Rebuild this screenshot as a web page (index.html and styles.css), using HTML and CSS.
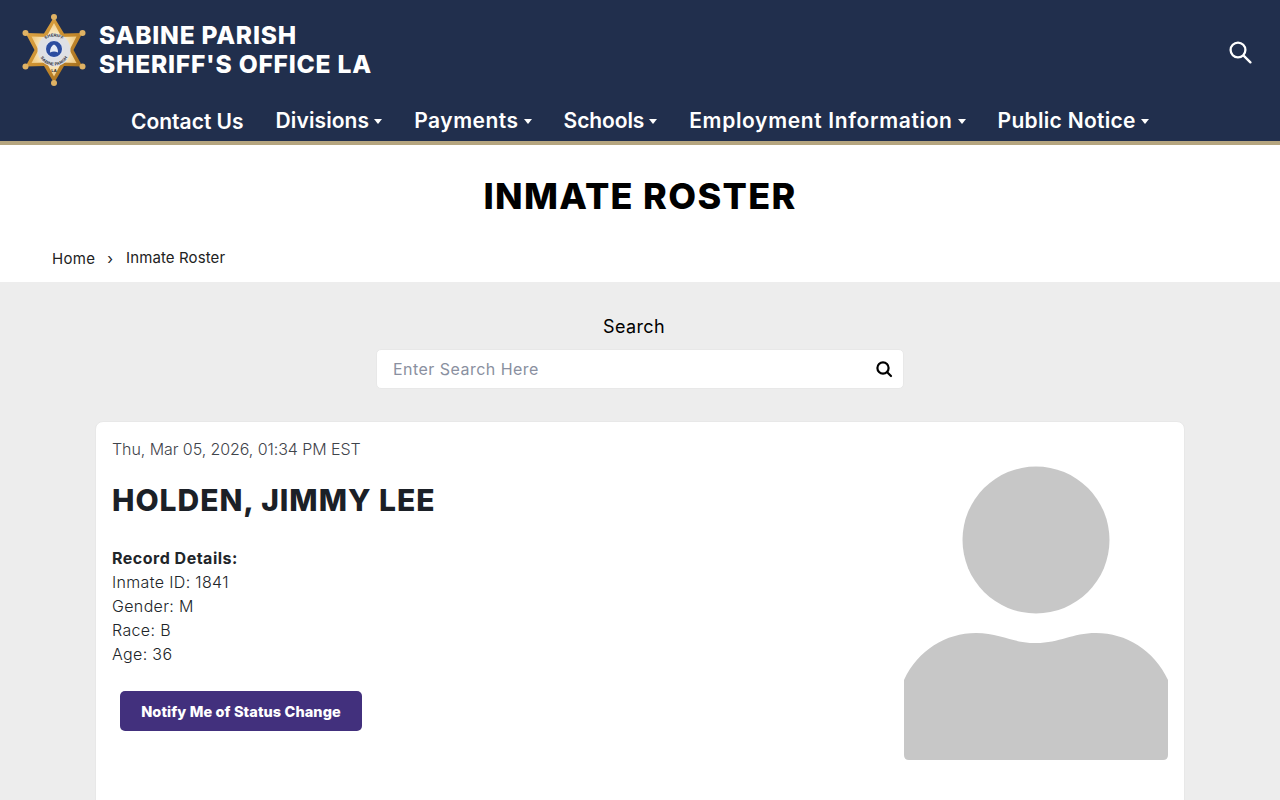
FILE: index.html
```html
<!DOCTYPE html>
<html lang="en">
<head>
<meta charset="utf-8">
<title>Inmate Roster</title>
<link rel="stylesheet" href="styles.css">
</head>
<body>
<header class="site-header">
  <div class="top-row">
    <a class="brand">
      <svg class="badge" viewBox="0 0 68 76" width="68" height="76" aria-hidden="true">
        <defs>
          <linearGradient id="gold" x1="0" y1="0" x2="1" y2="1">
            <stop offset="0" stop-color="#e3aa4a"/>
            <stop offset="0.5" stop-color="#c98d2e"/>
            <stop offset="1" stop-color="#99661a"/>
          </linearGradient>
          <radialGradient id="cream" cx="0.5" cy="0.5" r="0.55">
            <stop offset="0.4" stop-color="#fff3d6"/>
            <stop offset="1" stop-color="#eec77c"/>
          </radialGradient>
          <path id="arcTop" d="M20.5 38 A13.5 13.5 0 0 1 47.5 38"/>
          <path id="arcBottom" d="M18.5 38 A15.5 15.5 0 0 0 49.5 38"/>
        </defs>
        <path d="M34 5 L44 21.5 L62.5 21 L53.5 38 L62.5 54.5 L44 54 L34 71 L24 54 L5.5 54.5 L14.5 38 L5.5 21 L24 21.5 Z" fill="url(#gold)"/>
        <path d="M34 11 L41.5 25 L56.5 24.5 L49.5 38 L56.5 51 L41.5 50.5 L34 64.5 L26.5 50.5 L11.5 51 L18.5 38 L11.5 24.5 L26.5 25 Z" fill="url(#cream)"/>
        <circle cx="34" cy="5" r="3" fill="#dfb264"/>
        <circle cx="62.5" cy="21" r="3" fill="#dfb264"/>
        <circle cx="62.5" cy="54.5" r="3" fill="#dfb264"/>
        <circle cx="34" cy="71" r="3" fill="#dfb264"/>
        <circle cx="5.5" cy="54.5" r="3" fill="#dfb264"/>
        <circle cx="5.5" cy="21" r="3" fill="#dfb264"/>
        <circle cx="34" cy="38" r="16.5" fill="#dfe0e4"/>
        <text class="badge-text"><textPath href="#arcTop" startOffset="50%" text-anchor="middle">SHERIFF</textPath></text>
        <text class="badge-text"><textPath href="#arcBottom" startOffset="50%" text-anchor="middle">SABINE PARISH</textPath></text>
        <text class="badge-text" x="34" y="60" text-anchor="middle">LA</text>
        <circle cx="34" cy="37" r="8.5" fill="#2c4da0"/>
        <circle cx="34" cy="37" r="8.5" fill="none" stroke="#eef1f8" stroke-width="0.9"/>
        <path d="M30 40.5 Q30 34.5 34 32.5 Q38 34.5 38 40.5 Q34 38.5 30 40.5 Z" fill="#e6ebf6"/>
      </svg>
      <span class="brand-name">SABINE PARISH<br>SHERIFF'S OFFICE LA</span>
    </a>
    <button class="icon-btn" aria-label="Search">
      <svg viewBox="0 0 24 24" width="24" height="24" fill="none" stroke="#fff" stroke-width="2.3" stroke-linecap="round"><circle cx="10" cy="10" r="7.4"/><path d="M15.6 15.6 L22.4 22.4"/></svg>
    </button>
  </div>
  <nav class="main-nav">
    <a class="nav-item nav-plain">Contact Us</a>
    <a class="nav-item nav-div">Divisions<i class="caret"></i></a>
    <a class="nav-item nav-pay">Payments<i class="caret"></i></a>
    <a class="nav-item nav-sch">Schools<i class="caret"></i></a>
    <a class="nav-item nav-emp">Employment Information<i class="caret"></i></a>
    <a class="nav-item nav-pub">Public Notice<i class="caret"></i></a>
  </nav>
</header>

<section class="title-band">
  <h1>INMATE ROSTER</h1>
  <div class="crumbs"><a class="crumb-link">Home</a><span class="sep">›</span><span class="current">Inmate Roster</span></div>
</section>

<main class="content">
  <div class="search-block">
    <label class="search-label">Search</label>
    <div class="search-box">
      <span class="placeholder">Enter Search Here</span>
      <svg viewBox="0 0 18 18" width="18" height="18" fill="none" stroke="#000" stroke-width="2.2" stroke-linecap="round"><circle cx="8" cy="8" r="5.6"/><path d="M12.2 12.2 L16 16"/></svg>
    </div>
  </div>

  <article class="card">
    <div class="card-left">
      <div class="stamp">Thu, Mar 05, 2026, 01:34 PM EST</div>
      <h2>HOLDEN, JIMMY LEE</h2>
      <div class="details">
        <strong class="details-head">Record Details:</strong>
        <div>Inmate ID: 1841</div>
        <div>Gender: M</div>
        <div>Race: B</div>
        <div>Age: 36</div>
      </div>
      <button class="notify">Notify Me of Status Change</button>
    </div>
    <svg class="avatar" viewBox="0 0 264 296" width="264" height="296" aria-hidden="true">
      <circle cx="132" cy="74" r="73.5" fill="#c7c7c7"/>
      <path d="M0 214 C14 184 42 167 72 167 C96 167 108 177 132 177 C156 177 168 167 192 167 C222 167 250 184 264 214 L264 289 Q264 294 259 294 L5 294 Q0 294 0 289 Z" fill="#c7c7c7"/>
    </svg>
  </article>
</main>
</body>
</html>
```
FILE: styles.css
```css
* { box-sizing: border-box; }
html, body { margin: 0; padding: 0; height: 800px; overflow: hidden; }
body { font-family: "Inter", "Liberation Sans", sans-serif; background: #ededed; color: #000; }

.site-header { background: #212f4d; border-bottom: 4px solid #b5a57f; height: 145px; display: flex; flex-direction: column; }
.top-row { height: 100px; display: flex; align-items: flex-start; justify-content: space-between; padding: 12px 28px 0 20px; }
.brand { display: flex; align-items: center; gap: 11px; color: #fff; }
.badge { display: block; }
.badge-text { font-family: "Liberation Sans", sans-serif; font-size: 4.2px; font-weight: 700; fill: #2e2f36; }
.brand-name { font-size: 24.6px; line-height: 29px; font-weight: 800; letter-spacing: 0.76px; margin-bottom: 1px; }
.icon-btn { background: none; border: 0; padding: 0; margin-top: 28px; height: 24px; }

.main-nav { display: flex; padding-left: 131px; gap: 32px; align-items: center; height: 40px; }
.nav-item { color: #fff; font-size: 21px; font-weight: 600; display: flex; align-items: center; white-space: nowrap; }
.nav-plain { position: relative; top: 1px; }
.nav-div { letter-spacing: 0.1px; }
.nav-pay { letter-spacing: 0.5px; }
.nav-sch { letter-spacing: -0.1px; }
.nav-emp { letter-spacing: 0.65px; }
.nav-pub { letter-spacing: 0.3px; }
.caret { display: block; width: 0; height: 0; margin: 2px 0 0 5px; border-left: 4px solid transparent; border-right: 4px solid transparent; border-top: 5px solid #fff; }

.title-band { background: #fff; height: 137px; display: flex; flex-direction: column; }
h1 { margin: 28px 0 0; text-align: center; font-size: 36px; line-height: 46px; font-weight: 800; color: #000; letter-spacing: 1.32px; }
.crumbs { display: flex; align-items: center; margin-top: 30px; padding-left: 52px; font-size: 15px; line-height: 20px; color: #222; }
.crumb-link { letter-spacing: 0.3px; }
.sep { margin: 0 13px 0 12px; }
.current { position: relative; top: -1px; letter-spacing: 0.12px; }

.content { display: flex; flex-direction: column; align-items: center; }
.search-block { width: 528px; display: flex; flex-direction: column; align-items: center; padding-top: 34px; }
.search-label { font-size: 18px; line-height: 22px; font-weight: 400; margin-left: -12px; letter-spacing: 0.35px; }
.search-box { width: 100%; height: 40px; margin-top: 11px; background: #fff; border: 1px solid #e8e8e8; border-radius: 5px; display: flex; align-items: center; justify-content: space-between; padding: 0 10px 0 16px; }
.placeholder { font-size: 16px; color: #8a90a0; letter-spacing: 0.47px; }

.card { width: 1090px; height: 500px; margin-top: 32px; background: #fff; border: 1px solid #e8e8e8; border-radius: 8px; padding: 15px 16px; display: flex; justify-content: space-between; align-items: flex-start; }
.card-left { display: flex; flex-direction: column; align-items: flex-start; color: #212529; }
.stamp { font-size: 16px; line-height: 24px; color: #3f444b; font-weight: 300; letter-spacing: -0.07px; }
h2 { margin: 20px 0 0; font-size: 30px; line-height: 38px; font-weight: 800; color: #1b2027; letter-spacing: 0.97px; }
.details { margin-top: 27px; font-size: 16px; line-height: 24px; font-weight: 300; letter-spacing: 0.35px; }
.details-head { font-weight: 700; letter-spacing: 0.5px; }
.notify { margin: 25px 0 0 8px; width: 242px; height: 40px; border: 0; border-radius: 5px; background: #42307d; color: #fff; font-family: inherit; font-size: 14.5px; font-weight: 800; letter-spacing: 0.1px; }
.avatar { display: block; margin-top: 29px; filter: blur(0.5px); }
```
